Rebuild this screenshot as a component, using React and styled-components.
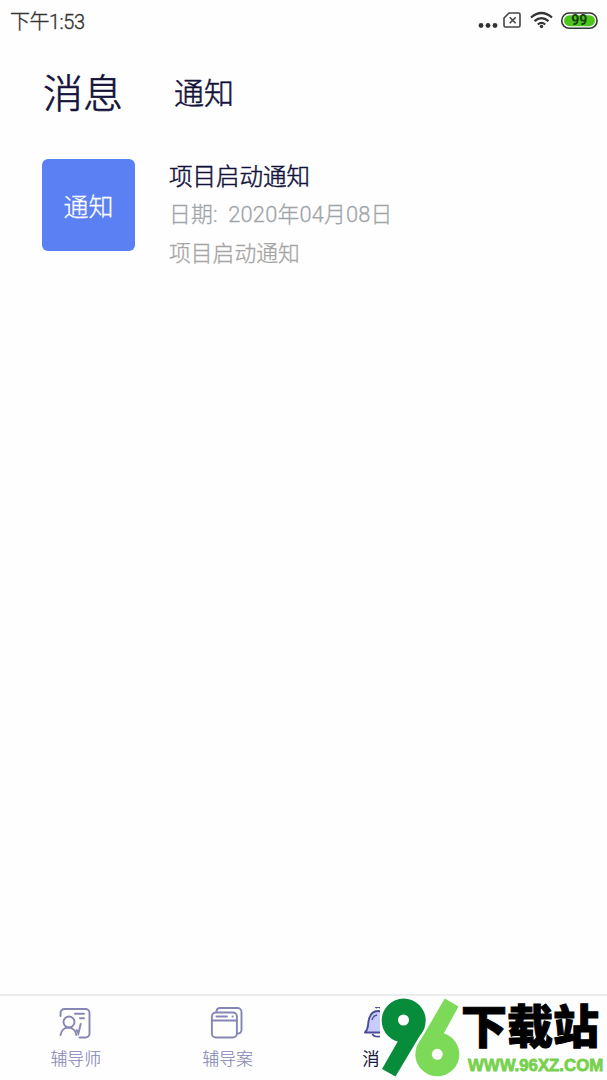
import React from 'react';
import styled, { createGlobalStyle } from 'styled-components';

const GlobalStyle = createGlobalStyle`
  * {
    box-sizing: border-box;
  }

  body {
    margin: 0;
    background: #fefefe;
    font-family: Roboto, "Noto Sans CJK SC", sans-serif;
  }
`;

const Screen = styled.div`
  position: relative;
  display: flex;
  flex-direction: column;
  height: 1080px;
  width: 607px;
  overflow: hidden;
`;

const StatusBar = styled.header`
  display: flex;
  align-items: center;
  justify-content: space-between;
  height: 42px;
  padding: 0 9px 0 10px;
`;

const Clock = styled.span`
  padding-top: 2px;
  font-size: 20px;
  font-weight: 300;
  line-height: 24px;
  letter-spacing: -0.5px;
  color: #333;
  -webkit-text-stroke: 0.35px #333;
`;

const StatusIcons = styled.div`
  display: flex;
  align-items: center;

  & svg {
    display: block;
  }
`;

const Heading = styled.div`
  display: flex;
  align-items: center;
  gap: 51px;
  height: 102px;
  padding: 1px 43px 0;
  color: #14123a;
`;

const Title = styled.h1`
  margin: 0;
  padding-top: 3px;
  font-size: 40px;
  font-weight: 300;
  line-height: 60px;
  -webkit-text-stroke: 0.6px #14123a;
`;

const SubTitle = styled.h2`
  margin: 0;
  font-size: 30px;
  font-weight: 300;
  line-height: 44px;
  -webkit-text-stroke: 0.5px #14123a;
`;

const MessageList = styled.main`
  flex: 1;
  padding: 15px 42px;
`;

const Message = styled.article`
  display: flex;
  gap: 34px;
`;

const Badge = styled.div`
  display: flex;
  align-items: center;
  justify-content: center;
  width: 93px;
  height: 92px;
  padding-bottom: 1px;
  border-radius: 6px;
  background: #5b80f3;
  color: #fff;
  font-size: 25px;
  font-weight: 300;
  -webkit-text-stroke: 0.3px #fff;
`;

const MessageBody = styled.div`
  display: flex;
  flex-direction: column;
`;

const MessageTitle = styled.h3`
  margin: 0;
  font-size: 23.5px;
  font-weight: 300;
  line-height: 36px;
  color: #14123a;
  -webkit-text-stroke: 0.5px #14123a;
`;

const MessageText = styled.p`
  margin: 0;
  padding-top: 1px;
  font-size: 21.8px;
  font-weight: 300;
  line-height: 38px;
  color: ${({ $color }) => $color};
  -webkit-text-stroke: 0.3px ${({ $color }) => $color};
`;

const MessageDate = styled(MessageText)`
  letter-spacing: 0.2px;
  word-spacing: 5px;
`;

const TabBar = styled.nav`
  display: grid;
  grid-template-columns: repeat(4, 1fr);
  height: 86px;
  border-top: 2px solid #ececee;
`;

const Tab = styled.a`
  display: flex;
  flex-direction: column;
  align-items: center;
  padding-top: 11px;
  font-size: 17px;
  font-weight: 300;
  line-height: 24px;
  color: ${({ $active }) => ($active ? '#14123a' : '#8586b4')};
  -webkit-text-stroke: ${({ $active }) => ($active ? '0.4px' : '0.15px')};

  & svg {
    display: block;
    margin: 0 2px 6px 0;
  }
`;

/* sits over the right end of the tab bar */
const SiteStamp = styled.aside`
  position: absolute;
  right: 0;
  bottom: 0;
  display: flex;
  width: 227px;
  height: 83px;
  background: #fefefe;

  & svg {
    flex: none;
  }
`;

const StampText = styled.div`
  display: flex;
  flex-direction: column;
  white-space: nowrap;
`;

const StampName = styled.strong`
  height: 59px;
  font-family: "Noto Sans CJK SC", sans-serif;
  font-size: 46px;
  font-weight: 900;
  line-height: 53px;
  color: #000;
  -webkit-text-stroke: 1px #000;
`;

const StampUrl = styled.span`
  padding-left: 7px;
  font-family: "Liberation Sans", sans-serif;
  font-size: 16.8px;
  font-weight: 700;
  line-height: 20px;
  color: #78d14e;
  -webkit-text-stroke: 0.8px #78d14e;
`;

const StatusGlyphs = () => (
  <svg width="122" height="24" viewBox="0 0 122 24" fill="none">
    <g fill="#333">
      <circle cx="5" cy="16.5" r="2.4" />
      <circle cx="12" cy="16.5" r="2.4" />
      <circle cx="19" cy="16.5" r="2.4" />
    </g>
    <path d="M33 4H42.500a1.500 1.500 0 0 1 1.500 1.500V16.500a1.500 1.500 0 0 1-1.500 1.500H29.500A1.500 1.500 0 0 1 28 16.500V9z" stroke="#444" strokeWidth="1.6" />
    <path d="M33.700 8.200l6 6M39.700 8.200l-6 6" stroke="#444" strokeWidth="1.6" />
    <g stroke="#333" strokeWidth="2.3">
      <path d="M55 8.500Q65.500 -.5 76 8.500" />
      <path d="M58.500 12.200Q65.500 6 72.500 12.200" />
      <path d="M61.800 15.500Q65.500 12.300 69.200 15.500" />
    </g>
    <circle cx="65.500" cy="17.500" r="1.700" fill="#333" />
    <rect x="85.700" y="4" width="35.400" height="15.300" rx="7.650" fill="#fff" stroke="#333" strokeWidth="1.600" />
    <rect x="88" y="6.200" width="31" height="11" rx="5.500" fill="#4cc51c" />
    <text x="103.300" y="16" textAnchor="middle" fontFamily="Roboto, sans-serif" fontSize="14" fontWeight="700" fill="#183d0c">99</text>
  </svg>
);

const TutorIcon = () => (
  <svg width="34" height="34" viewBox="0 0 34 34" fill="none" stroke="#8586b4" strokeWidth="1.900" strokeLinecap="round">
    <path d="M2.500 9V6a4 4 0 0 1 4-4H27.500a4 4 0 0 1 4 4V26.500a4 4 0 0 1-4 4H21.500" />
    <circle cx="11" cy="15" r="5.500" />
    <path d="M2.500 28C4 18 16.500 18 18.500 28" />
    <path d="M18.500 23l1.900 3.500 2.300-9.500M17 6.800h9M22 11.300h4" />
  </svg>
);

const CaseIcon = () => (
  <svg width="34" height="34" viewBox="0 0 34 34" fill="none" stroke="#8586b4" strokeWidth="1.900" strokeLinecap="round">
    <rect x="1.900" y="5.500" width="25" height="25" rx="4" />
    <path d="M6.500 4.500V4A3.500 3.500 0 0 1 10 1H27.500a4 4 0 0 1 4 4V23a3.500 3.500 0 0 1-4 3.500" />
    <path d="M2 13.500H27M6.500 9.500H17M22.500 9.500h.2" />
  </svg>
);

const BellIcon = () => (
  <svg width="34" height="34" viewBox="0 0 34 34" fill="none">
    <path d="M4 25.500c4-4 2.500-7.500 3.800-12.500C9 7 12.500 4 17 4s8 3 9.200 9c1.300 5-.2 8.500 3.800 12.500z" fill="#c8ccfa" />
    <path d="M14.500 1C16 -.5 18 -.5 19.500 1M4 25.500c4-4 2.500-7.500 3.800-12.500C9 7 12.500 4 17 4s8 3 9.200 9c1.300 5-.2 8.500 3.800 12.500zM11.500 27c1.500 3.500 9.500 3.500 11 0" stroke="#4a4b9b" strokeWidth="1.900" strokeLinejoin="round" />
    <path d="M11 13c.6-2.800 2.200-4.500 5-5" stroke="#4a4b9b" strokeWidth="1.300" />
  </svg>
);

const StampLogo = () => (
  <svg width="81" height="83" viewBox="0 0 81 83">
    <g fill="#078c3c">
      <circle cx="23.700" cy="23.500" r="22" />
      <path d="M18 44L2 72 15.500 79.500 45 30z" />
    </g>
    <g fill="#7dd958">
      <circle cx="57.300" cy="57.300" r="22" />
      <path d="M64.700 1.500L78.500 9.500 63.500 37 36 51z" />
    </g>
    <g fill="#fefefe">
      <circle cx="23.500" cy="23" r="5.500" />
      <circle cx="57.300" cy="57.300" r="5.500" />
    </g>
  </svg>
);

const tabs = [
  { label: '辅导师', Icon: TutorIcon },
  { label: '辅导案', Icon: CaseIcon },
  { label: '消息', Icon: BellIcon, active: true },
];

const App = () => {
  return (
    <>
      <GlobalStyle />
      <Screen>
        <StatusBar>
          <Clock>下午1:53</Clock>
          <StatusIcons>
            <StatusGlyphs />
          </StatusIcons>
        </StatusBar>
        <Heading>
          <Title>消息</Title>
          <SubTitle>通知</SubTitle>
        </Heading>
        <MessageList>
          <Message>
            <Badge>通知</Badge>
            <MessageBody>
              <MessageTitle>项目启动通知</MessageTitle>
              <MessageDate $color="#a0a5a8">日期: 2020年04月08日</MessageDate>
              <MessageText $color="#a5a5a5">项目启动通知</MessageText>
            </MessageBody>
          </Message>
        </MessageList>
        <TabBar>
          {tabs.map(({ label, Icon, active }) => (
            <Tab key={label} $active={active}>
              <Icon />
              {label}
            </Tab>
          ))}
        </TabBar>
        <SiteStamp>
          <StampLogo />
          <StampText>
            <StampName>下载站</StampName>
            <StampUrl>WWW.96XZ.COM</StampUrl>
          </StampText>
        </SiteStamp>
      </Screen>
    </>
  );
};

export default App;
